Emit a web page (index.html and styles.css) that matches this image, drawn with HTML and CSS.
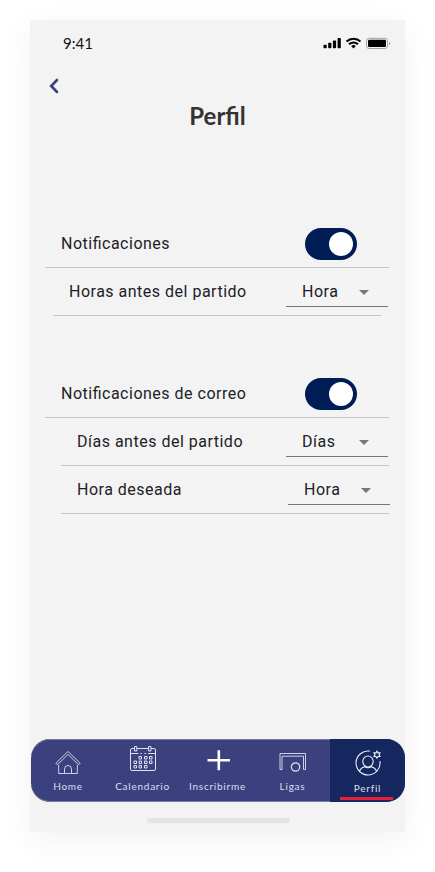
FILE: index.html
```
<!DOCTYPE html>
<html lang="es">
<head>
<meta charset="utf-8">
<title>Perfil</title>
<link rel="stylesheet" href="styles.css">
</head>
<body>
<main class="phone">
  <header class="status">
    <span class="time">9:41</span>
    <svg class="status-icons" width="68" height="14" viewBox="0 0 68 14">
      <g fill="#000">
        <rect x="0.5" y="7.7" width="3.2" height="3.6" rx=".8"/>
        <rect x="5.2" y="5.8" width="3.2" height="5.5" rx=".8"/>
        <rect x="9.9" y="3.4" width="3.2" height="7.9" rx=".8"/>
        <rect x="14.6" y="1" width="3.2" height="10.3" rx=".8"/>
        <path d="M30.500 11.500l-2.400-2.400a3.500 3.500 0 0 1 4.800 0z"/>
        <rect x="45" y="2.800" width="18" height="7.200" rx="1.200"/>
      </g>
      <g fill="none" stroke="#000" stroke-width="2">
        <path d="M23.500 4.600a10.200 10.200 0 0 1 14 0"/>
        <path d="M26 7.300a6.500 6.500 0 0 1 9 0"/>
      </g>
      <rect x="43.500" y="1.300" width="21" height="10.200" rx="2.500" fill="none" stroke="#a4a4a4"/>
      <path d="M66 4.700v3.500q1.300-.5 1.300-1.750t-1.300-1.750z" fill="#a4a4a4"/>
    </svg>
  </header>
  <div class="back">
    <svg width="12" height="18" viewBox="0 0 12 18"><path d="M9 3L3.200 9L9 15" fill="none" stroke="#3b417f" stroke-width="2.600" stroke-linecap="round"/></svg>
  </div>
  <h1>Perfil</h1>

  <section class="group">
    <div class="row main"><span>Notificaciones</span><span class="toggle"></span></div>
    <div class="row sub-first"><span>Horas antes del partido</span><span class="select"><span>Hora</span><i class="caret"></i></span></div>
  </section>
  <section class="group">
    <div class="row main"><span>Notificaciones de correo</span><span class="toggle"></span></div>
    <div class="row sub"><span>Días antes del partido</span><span class="select"><span>Días</span><i class="caret"></i></span></div>
    <div class="row sub wide"><span>Hora deseada</span><span class="select"><span>Hora</span><i class="caret"></i></span></div>
  </section>

  <nav class="nav">
    <a class="item">
      <svg width="30" height="28" viewBox="0 0 30 28" fill="none" stroke="#dfe1f1" stroke-width=".9" stroke-linejoin="round">
        <path d="M2.800 15.300L15 3.500l12.200 11.800-1.500 1.500L15 6.500 4.300 16.800z"/>
        <path d="M5.700 17v8.500h5.800V21a3.500 3.500 0 0 1 7 0v4.500h5.800V17M11.500 25.500h7"/>
      </svg>
      <span>Home</span>
    </a>
    <a class="item calendar">
      <svg width="30" height="28" viewBox="0 0 30 28" fill="none" stroke="#dfe1f1" stroke-width="1">
        <path d="M6.500 0.500H4a1.500 1.500 0 0 0-1.500 1.500v19a1.500 1.500 0 0 0 1.500 1.500h22a1.500 1.500 0 0 0 1.500-1.500V2a1.500 1.500 0 0 0-1.500-1.500H23M9 .5h11.500M2.500 5.500h8m2 0h1.500m2.500 0h1.500m2 0h8"/>
        <path d="M6.500-1.500h2.300v4.500H6.500zM20.600-1.500h2.300v4.500h-2.300z"/>
        <path d="M11 8.500h2.500v2.500h-2.500zM16.500 8.500h2.500v2.500h-2.500zM21.500 8.500h2.500v2.500h-2.500zM6 13h2.500v2.500H6zM11 13h2.500v2.500h-2.500zM16.500 13h2.500v2.500h-2.500zM21.500 13h2.500v2.500h-2.500zM6 17.500h2.500v2.500H6zM11 17.500h2.500v2.500h-2.500zM16.500 17.500h2.500v2.500h-2.500z"/>
      </svg>
      <span>Calendario</span>
    </a>
    <a class="item">
      <svg width="30" height="28" viewBox="0 0 30 28" stroke="#fff" stroke-width="2.600"><path d="M4.500 12.200h22.500M15.800 2.200v20"/></svg>
      <span>Inscribirme</span>
    </a>
    <a class="item">
      <svg width="30" height="28" viewBox="0 0 30 28" fill="none" stroke="#dfe1f1" stroke-width=".9">
        <path d="M2 21.500V5.500h25.500v16h-2V8.200H4v13.300z"/>
        <circle cx="17.500" cy="19" r="4.200" stroke-width="1.200"/>
      </svg>
      <span>Ligas</span>
    </a>
    <a class="item active">
      <svg width="30" height="30" viewBox="0 0 30 30" fill="none" stroke="#eceefa" stroke-width="1.100">
        <path d="M16.800 3.100A12 12 0 1 0 26.900 13.100"/>
        <ellipse cx="15" cy="13.500" rx="5.200" ry="5.500"/>
        <path d="M6.300 23.300q1.500-3.500 5.300-4.600q3.400 2 6.800 0q3.800 1.100 5.300 4.600"/>
        <path d="M24 3.200l1 1.700h2l-1 1.800 1 1.800h-2l-1 1.700-1-1.700h-2l1-1.800-1-1.800h2z"/>
      </svg>
      <span>Perfil</span>
      <b class="marker"></b>
    </a>
  </nav>
  <div class="home-bar"></div>
</main>
</body>
</html>
```
FILE: styles.css
```
* { box-sizing: border-box; }
body {
  margin: 0;
  padding: 20px 30px;
  height: 872px;
  overflow: hidden;
  background: #fff;
  font-family: Roboto, sans-serif;
}
.phone {
  width: 375px;
  height: 812px;
  background: #f3f3f3;
  box-shadow: 0 8px 30px rgba(0, 0, 0, .055);
  display: flex;
  flex-direction: column;
}
.status {
  height: 46px;
  padding: 0 14px 0 33px;
  display: flex;
  align-items: center;
  justify-content: space-between;
}
.time { font: 15px/20px Lato, sans-serif; color: #111; }
.status-icons { display: block; margin-top: 1px; }
.back { height: 36px; padding: 11px 0 0 18px; }
.back svg { display: block; }
h1 {
  margin: -1px 0 1px;
  height: 30px;
  font: 700 24px/30px Lato, sans-serif;
  color: #333;
  text-align: center;
}
.group { margin: 88px 16px 0 15px; }
.group + .group { margin-top: 54px; }
.row {
  height: 48px;
  padding-left: 16px;
  display: flex;
  align-items: center;
  justify-content: space-between;
  border-bottom: 1px solid #c6c6c8;
  color: #212125;
  font-size: 16px;
  line-height: 20px;
  letter-spacing: .5px;
  font-feature-settings: "liga" 1;
}
.main { padding-right: 32px; }
.sub-first { margin: 0 8px; }
.sub { margin-left: 16px; }
.toggle {
  width: 52px;
  height: 32px;
  padding: 4px;
  display: flex;
  justify-content: flex-end;
  background: #001c54;
  border-radius: 16px;
}
.toggle::before {
  content: "";
  width: 24px;
  height: 24px;
  border-radius: 50%;
  background: #fff;
}
.select {
  width: 102px;
  height: 30px;
  margin-right: 1px;
  padding: 2px 19px 0 16px;
  display: flex;
  align-items: center;
  justify-content: space-between;
  border-bottom: 1px solid #77767e;
  border-radius: 4px 4px 0 0;
  background: #f4f4f4;
}
.sub-first .select { margin-right: -7px; }
.wide .select { margin-right: -1px; }
.caret {
  border: 5px solid transparent;
  border-top-color: #77767e;
  border-bottom: 0;
}
.nav {
  height: 63px;
  margin: auto 0 0 1px;
  display: grid;
  grid-template-columns: 74px repeat(3, 75px) 1fr;
  background: #3b417f;
  border-radius: 19px;
  overflow: hidden;
  box-shadow: inset 0 1px #777b9e, inset 0 -1px #777b9e;
}
.item {
  display: flex;
  flex-direction: column;
  align-items: center;
  padding-top: 9px;
  color: #dcdeee;
  font: 10px/14px Lato, sans-serif;
  letter-spacing: .75px;
}
.item svg { display: block; height: 28px; overflow: visible; }
.item span { margin-top: 3px; }
.active { background: #14285f; }
.active svg { height: 30px; }
.active span { margin-top: 3px; }
.marker { width: 53px; height: 3px; margin: 2px 2px 0 0; background: #e81f3f; }
.home-bar {
  width: 143px;
  height: 5px;
  margin: 16px 0 9px 117px;
  border-radius: 3px;
  background: #e4e4e4;
}
```
